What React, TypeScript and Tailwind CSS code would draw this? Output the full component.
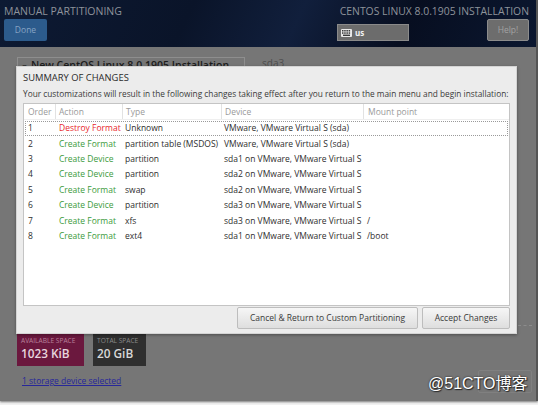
import React from 'react';

type Change = {
  order: number;
  action: string;
  type: string;
  device: string;
  mount: string;
};

const changes: Change[] = [
  { order: 1, action: 'Destroy Format', type: 'Unknown', device: 'VMware, VMware Virtual S (sda)', mount: '' },
  { order: 2, action: 'Create Format', type: 'partition table (MSDOS)', device: 'VMware, VMware Virtual S (sda)', mount: '' },
  { order: 3, action: 'Create Device', type: 'partition', device: 'sda1 on VMware, VMware Virtual S', mount: '' },
  { order: 4, action: 'Create Device', type: 'partition', device: 'sda2 on VMware, VMware Virtual S', mount: '' },
  { order: 5, action: 'Create Format', type: 'swap', device: 'sda2 on VMware, VMware Virtual S', mount: '' },
  { order: 6, action: 'Create Device', type: 'partition', device: 'sda3 on VMware, VMware Virtual S', mount: '' },
  { order: 7, action: 'Create Format', type: 'xfs', device: 'sda3 on VMware, VMware Virtual S', mount: '/' },
  { order: 8, action: 'Create Format', type: 'ext4', device: 'sda1 on VMware, VMware Virtual S', mount: '/boot' },
];

function KeyboardIcon() {
  return (
    <svg width="11" height="8" viewBox="0 0 11 8" className="shrink-0">
      <rect x="0" y="0" width="11" height="8" rx="1" fill="#e8e8e8" />
      <g fill="#3a3a3a">
        <rect x="1" y="1" width="1.5" height="1.5" />
        <rect x="3.2" y="1" width="1.5" height="1.5" />
        <rect x="5.4" y="1" width="1.5" height="1.5" />
        <rect x="7.6" y="1" width="1.5" height="1.5" />
        <rect x="1" y="3.3" width="1.5" height="1.5" />
        <rect x="3.2" y="3.3" width="1.5" height="1.5" />
        <rect x="5.4" y="3.3" width="1.5" height="1.5" />
        <rect x="7.6" y="3.3" width="1.5" height="1.5" />
        <rect x="2" y="5.6" width="7" height="1.4" />
      </g>
    </svg>
  );
}

export default function App() {
  return (
    <div
      className="w-[538px] h-[405px] flex flex-col overflow-hidden bg-[#f2f2f2]"
      style={{ fontFamily: '"Open Sans", "Noto Sans", sans-serif' }}
    >
      <div className="h-[401px] flex flex-col bg-[#767676] border-r-2 border-[#555] shadow-[0_1px_2px_rgba(0,0,0,0.5)]">
        {/* Header */}
        <div className="h-[47px] shrink-0 flex justify-between px-[4px] pt-[4px] bg-[linear-gradient(115deg,#0d1a33_0%,#0a1429_35%,#111f3c_55%,#070e20_75%,#0b1730_100%)]">
          <div className="flex flex-col">
            <span className="text-[10.5px] leading-[14px] text-[#8e939b]">MANUAL PARTITIONING</span>
            <div className="mt-[1px] w-[43px] h-[22px] rounded-[2px] bg-[#2c5b8c] flex items-center justify-center text-[8.5px] text-[#86a4c4]">
              Done
            </div>
          </div>
          <div className="flex flex-col items-end pr-[3px]">
            <span className="text-[10.4px] leading-[14px] text-[#8e939b]">CENTOS LINUX 8.0.1905 INSTALLATION</span>
            <div className="flex items-start gap-[78px] mt-[1px]">
              <div className="mt-[5px] w-[72px] h-[17px] bg-[#6c6c6c] border border-[#8a8a8a] flex items-center gap-[3px] px-[3px]">
                <KeyboardIcon />
                <span className="text-[8px] font-bold text-[#f2f2f2]">us</span>
              </div>
              <div className="w-[42px] h-[22px] rounded-[2px] bg-[#6d6d6d] border border-[#8c8c8c] flex items-center justify-center text-[8.5px] text-[#a2a2a2]">
                Help!
              </div>
            </div>
          </div>
        </div>

        {/* Body */}
        <div className="relative flex-1 px-[17px] pt-[10px]">
          <div className="flex gap-[17px]">
            <div className="w-[228px] h-[273px] border border-[#8e8e8e] pl-[3px] flex items-start">
              <span className="text-[10.5px] font-semibold text-[#1c1c1c] leading-[14px] whitespace-nowrap">
                <span className="text-[7px] text-[#3a3a3a] mr-[3px]">▼</span>New CentOS Linux 8.0.1905 Installation
              </span>
            </div>
            <span className="text-[10px] text-[#4e4e4e] leading-[10px] mt-[1px]">sda3</span>
          </div>

          <div className="flex gap-[9px] mt-[4px]">
            <div className="w-[67px] h-[32px] bg-[#6b183e] px-[4px] pt-[2px] flex flex-col">
              <span className="text-[6.6px] leading-[9px] text-[#b9809b]">AVAILABLE SPACE</span>
              <span className="text-[11.8px] leading-[17px] font-semibold text-[#e8d5de]">1023 KiB</span>
            </div>
            <div className="w-[53px] h-[32px] bg-[#2f2f2f] px-[4px] pt-[2px] flex flex-col">
              <span className="text-[6.6px] leading-[9px] text-[#8a8a8a]">TOTAL SPACE</span>
              <span className="text-[11.8px] leading-[17px] font-semibold text-[#d8d8d8]">20 GiB</span>
            </div>
          </div>

          <div className="mt-[9px] pl-[5px] flex justify-between items-start">
            <span className="text-[8.5px] text-[#27279a] underline">1 storage device selected</span>
          </div>

          {/* faint reset button behind watermark */}
          <div className="absolute left-[478px] top-[323px] w-[54px] h-[23px] border border-[#808080] rounded-[2px]" />

          {/* dashed edge next to dialog */}
          <div className="absolute left-[518px] top-[278px] w-[14px] border-t border-dashed border-[#8c8c8c]" />

          {/* Summary dialog */}
          <div className="absolute left-[16px] top-[19px] w-[501px] h-[268px] bg-[#ececec] border border-[#d4d4d4] shadow-[0_1px_3px_rgba(0,0,0,0.35)] px-[6px] flex flex-col">
            <div className="text-[9.4px] leading-[12px] mt-[5px] text-[#2a2a2a]">SUMMARY OF CHANGES</div>
            <div className="text-[8.3px] leading-[12px] mt-[4px] text-[#3a3a3a] whitespace-nowrap">
              Your customizations will result in the following changes taking effect after you return to the main menu and begin installation:
            </div>

            <div className="mt-[3px] h-[203px] bg-white border border-[#c4c4c4] flex flex-col">
              <div className="h-[16px] flex text-[8.5px] text-[#9a9a9a] leading-[16px] border-b border-[#efefef]">
                <div className="w-[32px] pl-[4px] border-r border-[#e2e2e2]">Order</div>
                <div className="w-[67px] pl-[3px] border-r border-[#e2e2e2]">Action</div>
                <div className="w-[99px] pl-[3px] border-r border-[#e2e2e2]">Type</div>
                <div className="w-[142px] pl-[3px] border-r border-[#e2e2e2]">Device</div>
                <div className="flex-1 pl-[4px]">Mount point</div>
              </div>
              <div className="flex flex-col mt-[1px]">
                {changes.map((c, i) => (
                  <div
                    key={c.order}
                    className={`h-[15.4px] flex items-center text-[8.5px] text-[#2e2e2e] whitespace-nowrap ${
                      i === 0 ? 'mx-[1px] border border-dotted border-[#9a9a9a]' : 'mx-[1px] border border-transparent'
                    }`}
                  >
                    <div className="w-[31px] pl-[2px]">{c.order}</div>
                    <div className={`w-[67px] pl-[2px] ${c.action.startsWith('Destroy') ? 'text-[#e8262c]' : 'text-[#3c9b3c]'}`}>
                      {c.action}
                    </div>
                    <div className="w-[99px] pl-[1px]">{c.type}</div>
                    <div className="w-[142px] pl-[1px]">{c.device}</div>
                    <div className="flex-1 pl-[2px]">{c.mount}</div>
                  </div>
                ))}
              </div>
            </div>

            <div className="flex justify-end gap-[4px] mt-[1px]">
              <div className="w-[181px] h-[22px] rounded-[2px] border border-[#bdbdbd] bg-[linear-gradient(#f6f6f6,#dedede)] flex items-center justify-center text-[8.5px] text-[#3a3a3a]">
                Cancel &amp; Return to Custom Partitioning
              </div>
              <div className="w-[88px] h-[22px] rounded-[2px] border border-[#bdbdbd] bg-[linear-gradient(#f6f6f6,#dedede)] flex items-center justify-center text-[8.5px] text-[#3a3a3a]">
                Accept Changes
              </div>
            </div>
          </div>

          {/* watermark */}
          <div
            className="absolute left-[428px] top-[327px] text-[16px] leading-[20px] text-white [text-shadow:0_0_2px_rgba(0,0,0,0.8),1px_1px_1px_rgba(0,0,0,0.6)]"
            style={{ fontFamily: '"Liberation Sans", "Noto Sans CJK SC", sans-serif' }}
          >
            @51CTO博客
          </div>
        </div>
      </div>
    </div>
  );
}
